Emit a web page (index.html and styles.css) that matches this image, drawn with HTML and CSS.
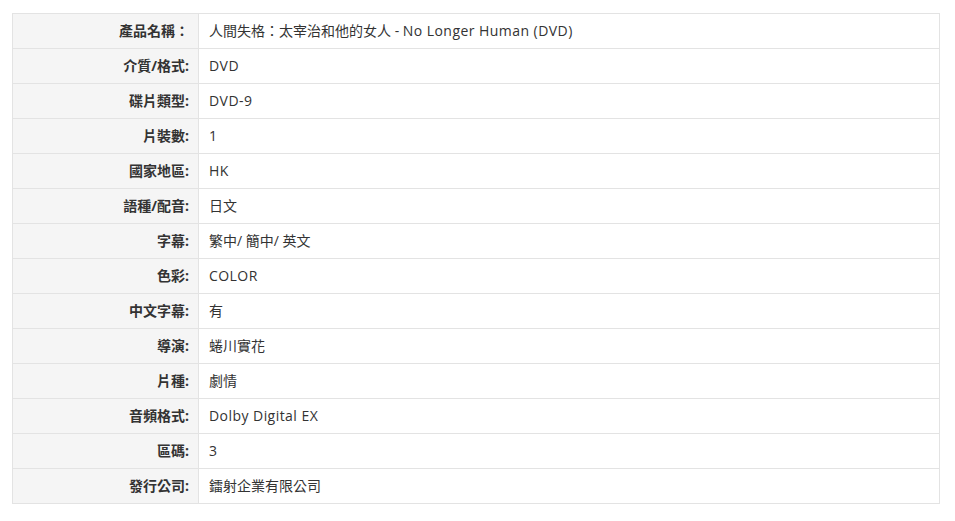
FILE: index.html
```html
<!DOCTYPE html>
<html lang="zh-Hant">
<head>
<meta charset="utf-8">
<title>產品資料</title>
<link rel="stylesheet" href="styles.css">
</head>
<body>
<table class="spec">
  <tbody>
    <tr><th>產品名稱：</th><td>人間失格：太宰治和他的女人 - <span class="lat">No Longer Human (DVD)</span></td></tr>
    <tr><th>介質/格式:</th><td><span class="lat">DVD</span></td></tr>
    <tr><th>碟片類型:</th><td><span class="lat">DVD-9</span></td></tr>
    <tr><th>片裝數:</th><td><span class="lat">1</span></td></tr>
    <tr><th>國家地區:</th><td><span class="lat">HK</span></td></tr>
    <tr><th>語種/配音:</th><td>日文</td></tr>
    <tr><th>字幕:</th><td>繁中/ 簡中/ 英文</td></tr>
    <tr><th>色彩:</th><td><span class="lat">COLOR</span></td></tr>
    <tr><th>中文字幕:</th><td>有</td></tr>
    <tr><th>導演:</th><td>蜷川實花</td></tr>
    <tr><th>片種:</th><td>劇情</td></tr>
    <tr><th>音頻格式:</th><td><span class="lat">Dolby Digital EX</span></td></tr>
    <tr><th>區碼:</th><td><span class="lat">3</span></td></tr>
    <tr><th>發行公司:</th><td>鐳射企業有限公司</td></tr>
  </tbody>
</table>
</body>
</html>
```

FILE: styles.css
```css
html, body {
  margin: 0;
  padding: 0;
  background: #ffffff;
}
body {
  padding: 13px 0 0 12px;
  font-family: "Open Sans", "Noto Sans CJK TC", sans-serif;
  font-size: 14px;
  color: #333333;
}
.spec {
  width: 928px;
  border-collapse: collapse;
  border: 1px solid #e3e3e3;
}
.spec th,
.spec td {
  height: 35px;
  padding: 0 10px;
  border: 1px solid #e3e3e3;
  box-sizing: border-box;
  vertical-align: middle;
  line-height: 20px;
}
.spec th {
  width: 186px;
  background: #f5f5f5;
  text-align: right;
  font-weight: bold;
  padding-right: 9px;
}
.spec td {
  text-align: left;
  font-weight: normal;
}
.lat {
  letter-spacing: 0.45px;
}
```
